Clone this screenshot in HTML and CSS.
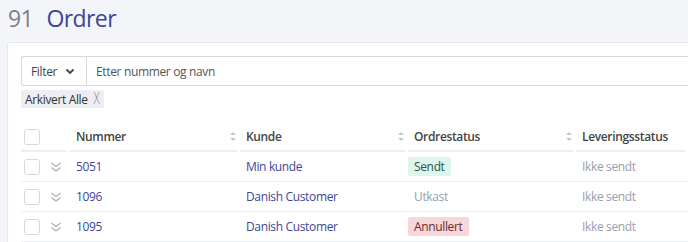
FILE: index.html
```html
<!doctype html>
<html lang="no">
<head>
	<meta charset="UTF-8">
	<title>Ordrer</title>
	<link rel="stylesheet" href="styles.css">
</head>
<body>
	<h1 class="title"><span class="count">91</span> Ordrer</h1>
	<div class="card">
		<div class="search">
			<div class="filter-btn">Filter
				<svg width="10" height="7" viewBox="0 0 10 7"><path d="M1.5 1.5 L5 5 L8.5 1.5" fill="none" stroke="#444" stroke-width="1.8"/></svg>
			</div>
			<div class="search-input">Etter nummer og navn</div>
		</div>
		<div class="tags">
			<span class="tag">Arkivert Alle <span class="tag-x">X</span></span>
		</div>

		<div class="grid">
			<div class="row head">
				<div class="cell c-check"><span class="box"></span></div>
				<div class="cell c-exp"></div>
				<div class="cell c-col">Nummer<i class="sort"></i></div>
				<div class="cell c-col">Kunde<i class="sort"></i></div>
				<div class="cell c-col">Ordrestatus<i class="sort"></i></div>
				<div class="cell c-col">Leveringsstatus</div>
			</div>
			<div class="row">
				<div class="cell c-check"><span class="box"></span></div>
				<div class="cell c-exp"><svg class="dbl" width="12" height="12" viewBox="0 0 12 12"><path d="M1.5 2 L6 5.5 L10.5 2 M1.5 6.5 L6 10 L10.5 6.5" fill="none" stroke="#a8adb8" stroke-width="1.1"/></svg></div>
				<div class="cell c-col link">5051</div>
				<div class="cell c-col link">Min kunde</div>
				<div class="cell c-col"><span class="badge sent">Sendt</span></div>
				<div class="cell c-col muted">Ikke sendt</div>
			</div>
			<div class="row">
				<div class="cell c-check"><span class="box"></span></div>
				<div class="cell c-exp"><svg class="dbl" width="12" height="12" viewBox="0 0 12 12"><path d="M1.5 2 L6 5.5 L10.5 2 M1.5 6.5 L6 10 L10.5 6.5" fill="none" stroke="#a8adb8" stroke-width="1.1"/></svg></div>
				<div class="cell c-col link">1096</div>
				<div class="cell c-col link">Danish Customer</div>
				<div class="cell c-col"><span class="badge draft">Utkast</span></div>
				<div class="cell c-col muted">Ikke sendt</div>
			</div>
			<div class="row">
				<div class="cell c-check"><span class="box"></span></div>
				<div class="cell c-exp"><svg class="dbl" width="12" height="12" viewBox="0 0 12 12"><path d="M1.5 2 L6 5.5 L10.5 2 M1.5 6.5 L6 10 L10.5 6.5" fill="none" stroke="#a8adb8" stroke-width="1.1"/></svg></div>
				<div class="cell c-col link">1095</div>
				<div class="cell c-col link">Danish Customer</div>
				<div class="cell c-col"><span class="badge cancel">Annullert</span></div>
				<div class="cell c-col muted">Ikke sendt</div>
			</div>
		</div>
	</div>
</body>
</html>
```

FILE: styles.css
```css
*{
	margin:0;
	padding:0;
	box-sizing:border-box;
}
body{
	background:#f4f5f9;
	font-family:"Open Sans","Noto Sans",sans-serif;
	font-size:12px;
	letter-spacing:-0.35px;
	color:#333;
	overflow:hidden;
}
.title{
	font-weight:400;
	font-size:23px;
	letter-spacing:-0.6px;
	line-height:30px;
	padding:3px 0 0 8px;
	height:42px;
	color:#3d4696;
}
.title .count{
	color:#7b7f88;
	margin-right:8px;
}
.card{
	margin-left:7px;
	background:#fff;
	border:1px solid #e6e7ec;
	border-right:none;
	border-radius:3px 0 0 0;
	padding:13px 0 0 13px;
	height:220px;
}
.search{
	display:flex;
	height:30px;
	border:1px solid #d7d9df;
	border-right:none;
	border-radius:3px 0 0 3px;
}
.filter-btn{
	display:flex;
	align-items:center;
	gap:8px;
	width:65px;
	padding-left:9px;
	border-right:1px solid #d7d9df;
	color:#444;
}
.search-input{
	display:flex;
	align-items:center;
	padding-left:9px;
	color:#555;
}
.tags{
	padding-top:4px;
	height:37px;
}
.tag{
	display:inline-flex;
	align-items:center;
	gap:4px;
	background:#eceef3;
	border-radius:2px;
	height:18px;
	padding:0 5px 0 4px;
	color:#333;
	font-size:12px;
}
.tag-x{
	font-family:"DejaVu Sans",sans-serif;
	font-size:15px;
	font-weight:200;
	line-height:16px;
	transform:scaleX(0.7);
	width:7px;
	color:#7d828c;
}
.row{
	display:grid;
	grid-template-columns:24px 25px 170px 168px 168px 1fr;
	height:30px;
	border-bottom:1px solid #eceef2;
}
.row.head{
	height:29px;
	border-bottom:none;
	font-weight:600;
	color:#444;
}
.row.head .cell{
	border-bottom:2px solid #eceef2;
	margin-right:3px;
}
.row.head .c-check{
	margin-right:0;
}
.cell{
	display:flex;
	align-items:center;
	position:relative;
}
.c-check{
	padding-left:3px;
}
.box{
	width:16px;
	height:16px;
	border:1px solid #d6d8de;
	border-radius:3px;
	background:#fff;
}
.c-exp{
	padding-left:5px;
}
.c-col{
	padding-left:6px;
}
.sort{
	position:absolute;
	right:1px;
	top:9px;
	width:6px;
	height:9px;
}
.sort:before,.sort:after{
	content:"";
	position:absolute;
	left:0;
	border-left:3px solid transparent;
	border-right:3px solid transparent;
}
.sort:before{
	top:0;
	border-bottom:3px solid #c4c7ce;
}
.sort:after{
	bottom:0;
	border-top:3px solid #c4c7ce;
}
.link{
	color:#3d4696;
}
.muted{
	color:#9a9ea6;
}
.badge{
	display:inline-block;
	height:19px;
	line-height:19px;
	padding:0 6px;
	margin-left:-6px;
	border-radius:2px;
}
.badge.sent{
	background:#def5ec;
	color:#2f5547;
}
.badge.draft{
	color:#9a9ea6;
}
.badge.cancel{
	background:#f7d7d9;
	color:#6a2a30;
}
```
